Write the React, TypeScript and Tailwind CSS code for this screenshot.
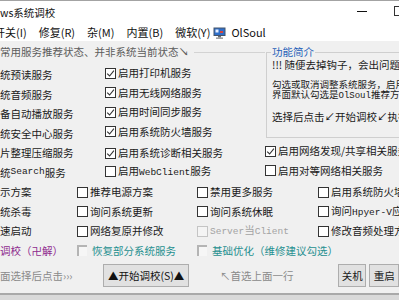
import React from 'react';

const cjk = "font-['Noto_Sans_CJK_SC',sans-serif]";
const mono = "font-['Liberation_Mono',monospace] text-[9.5px]";

function Box({ checked, disabled }: { checked?: boolean; disabled?: boolean }) {
  return (
    <span
      className={`flex w-[11px] h-[11px] shrink-0 items-center justify-center border ${
        disabled ? 'border-[#c4c4c4] bg-[#f4f4f4]' : 'border-[#333333] bg-white'
      }`}
    >
      {checked && (
        <svg width="9" height="9" viewBox="0 0 9 9">
          <path d="M1.2 4.6 L3.6 7 L7.9 1.6" stroke="#333333" strokeWidth="1.1" fill="none" />
        </svg>
      )}
    </span>
  );
}

function FlatBox() {
  return (
    <span className="block w-[10px] h-[11px] shrink-0 border-l-2 border-t-2 border-[#b4b4b4] bg-[#f6f6f6]" />
  );
}

function Check({ checked, children }: { checked?: boolean; children: React.ReactNode }) {
  return (
    <div className="flex items-center gap-[2px] whitespace-nowrap overflow-hidden">
      <Box checked={checked} />
      <span>{children}</span>
    </div>
  );
}

function MonitorIcon() {
  return (
    <svg width="13" height="12" viewBox="0 0 13 12">
      <rect x="1" y="1" width="11" height="7.5" fill="#2f6fc9" stroke="#44546a" strokeWidth="1" />
      <rect x="2.5" y="2.5" width="3" height="3" fill="#e8f0ff" />
      <rect x="7" y="4" width="3" height="2" fill="#d9443a" />
      <rect x="5" y="9" width="3" height="1.5" fill="#6b6b6b" />
      <rect x="3" y="10.5" width="7" height="1.3" fill="#8a8a8a" />
    </svg>
  );
}

export default function App() {
  return (
    <div className={`w-[399px] h-[300px] overflow-hidden bg-[#f0f0f0] text-[10.5px] text-[#1a1a1a] ${cjk}`}>
      <div className="h-px bg-[#a3a3a3]" />

      {/* title bar */}
      <div className="h-[23px] bg-white flex items-center relative">
        <span className="text-[10.5px] text-[#111111]">ws系统调校</span>
        <span className="absolute left-[357px] top-[10px] w-[10px] h-px bg-[#111111]" />
        <span className="absolute left-[394px] top-[5px] w-[11px] h-[10px] border border-[#333333]" />
      </div>

      {/* menu bar */}
      <div className="h-[17px] bg-white flex items-center text-[11px] text-[#111111] ml-[-6px] gap-[12px]">
        <span>开关(I)</span>
        <span>修复(R)</span>
        <span>杂(M)</span>
        <span>内置(B)</span>
        <span>微软(Y)</span>
        <span className="flex items-center gap-[5px] ml-[-9px]">
          <MonitorIcon />
          <span>OlSoul</span>
        </span>
      </div>

      {/* upper group */}
      <div className="grid grid-cols-[105px_160px_134px] grid-rows-[24.25px_repeat(6,19.5px)]">
        <div className="col-span-2 flex items-start pt-[4px]">
          <span className="text-[#5c5c5c] whitespace-nowrap leading-[14px]">常用服务推荐状态、并非系统当前状态↘</span>
          <span className="flex-1 h-px bg-[#d3d3d3] mt-[7px] ml-[5px]" />
        </div>

        <div className="col-start-3 row-start-1 row-span-5 pl-px">
          <div className="relative mt-[11px] h-[86px]">
            <div className="h-full border-t border-l border-b border-[#cfcfcf] pl-[5px] whitespace-nowrap overflow-hidden">
              <div className="pt-[6px] leading-[12px]">!!! 随便去掉钩子，会出问题</div>
              <div className="mt-[8px] leading-[10px] text-[9.5px]">
                <div>勾选或取消调整系统服务，启用或禁用相应功能</div>
                <div>
                  界面默认勾选是<span className="font-['Liberation_Mono',monospace] text-[9px]">OlSoul</span>推荐方案
                </div>
              </div>
              <div className="mt-[10px] leading-[12px]">选择后点击↙开始调校↙执行</div>
            </div>
            <span className="absolute left-[5px] top-[-7px] bg-[#f0f0f0] px-px text-[#1f5fb8] leading-[13px] whitespace-nowrap">功能简介</span>
          </div>
        </div>

        <div className="col-start-1 row-start-2 flex items-center whitespace-nowrap">统预读服务</div>
        <div className="col-start-2 row-start-2"><Check checked>启用打印机服务</Check></div>

        <div className="col-start-1 row-start-3 flex items-center whitespace-nowrap">统音频服务</div>
        <div className="col-start-2 row-start-3"><Check checked>启用无线网络服务</Check></div>

        <div className="col-start-1 row-start-4 flex items-center whitespace-nowrap">备自动播放服务</div>
        <div className="col-start-2 row-start-4"><Check checked>启用时间同步服务</Check></div>

        <div className="col-start-1 row-start-5 flex items-center whitespace-nowrap">统安全中心服务</div>
        <div className="col-start-2 row-start-5"><Check checked>启用系统防火墙服务</Check></div>

        <div className="col-start-1 row-start-6 flex items-center whitespace-nowrap">片整理压缩服务</div>
        <div className="col-start-2 row-start-6 flex items-center gap-[2px] whitespace-nowrap">
          <Box checked />
          <span>启用系统诊断相关服务</span>
        </div>
        <div className="col-start-3 row-start-6"><Check checked>启用网络发现/共享相关服务</Check></div>

        <div className="col-start-1 row-start-7 flex items-center whitespace-nowrap">
          统<span className={mono}>Search</span>服务
        </div>
        <div className="col-start-2 row-start-7">
          <Check>
            启用<span className={mono}>WebClient</span>服务
          </Check>
        </div>
        <div className="col-start-3 row-start-7"><Check>启用对等网络相关服务</Check></div>
      </div>

      {/* lower options */}
      <div className="grid grid-cols-[77px_120px_121px_81px] grid-rows-[repeat(4,19.5px)] items-center">
        <div className="whitespace-nowrap">示方案</div>
        <Check>推荐电源方案</Check>
        <Check>禁用更多服务</Check>
        <Check>启用系统防火墙</Check>

        <div className="whitespace-nowrap">统杀毒</div>
        <Check>询问系统更新</Check>
        <Check>询问系统休眠</Check>
        <Check>
          询问<span className={mono}>Hpyer-V</span>应用
        </Check>

        <div className="whitespace-nowrap">速启动</div>
        <Check>网络复原并修改</Check>
        <div className="flex items-center gap-[2px] whitespace-nowrap text-[#a3a3a3]">
          <Box disabled />
          <span>
            <span className={mono}>Server</span>当<span className={mono}>Client</span>
          </span>
        </div>
        <Check>修改音频处理方式</Check>

        <div className="whitespace-nowrap text-[#8e2a8e]">调校（卍解）</div>
        <div className="flex items-center gap-[5px] whitespace-nowrap text-[#1f8f8f]">
          <FlatBox />
          <span>恢复部分系统服务</span>
        </div>
        <div className="col-span-2 flex items-center gap-[5px] whitespace-nowrap text-[#1f8f8f]">
          <FlatBox />
          <span>基础优化（维修建议勾选）</span>
        </div>
      </div>

      {/* action row */}
      <div className="h-[32.75px] flex items-start pt-[4px] whitespace-nowrap">
        <div className="w-[105px] h-[23px] flex items-center text-[#8a8a8a]">面选择后点击›››</div>
        <button className="w-[87px] h-[23px] border border-[#adadad] bg-[#e1e1e1] text-[#111111] text-[10.5px]">
          ▲开始调校(S)▲
        </button>
        <div className="w-[151px] h-[23px] flex items-center pl-[31px] text-[#8a8a8a]">↖首选上面一行</div>
        <button className="w-[29px] h-[23px] border border-[#adadad] bg-[#e1e1e1] text-[10.5px]">关机</button>
        <button className="ml-[3px] w-[30px] h-[23px] border border-[#adadad] bg-[#e1e1e1] text-[10.5px]">重启</button>
      </div>

      <div className="h-[2px] bg-[#a9a9a9]" />
      <div className="h-[6px] bg-[#d9d9d9]" />
    </div>
  );
}
